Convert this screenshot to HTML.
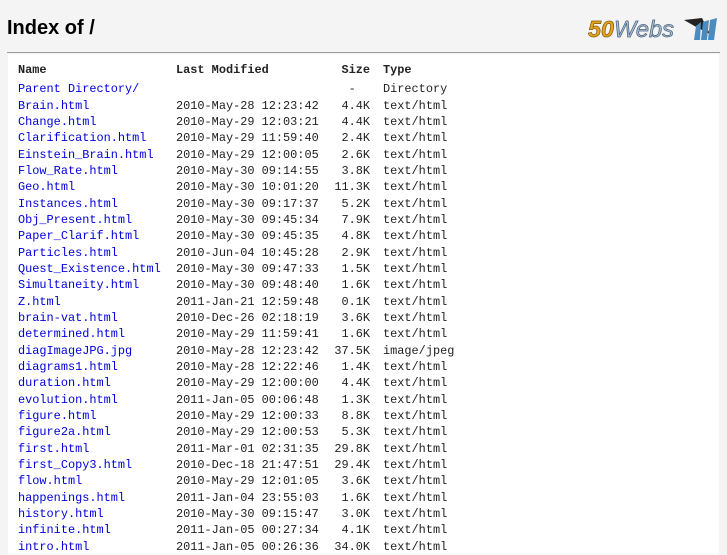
<!DOCTYPE html>
<html><head><meta charset="utf-8"><style>
html,body{margin:0;padding:0;background:#f4f4f4;width:727px;height:545px;overflow:hidden}
h1{position:absolute;left:7px;top:17px;margin:0;font:bold 20px "Liberation Sans",sans-serif;color:#000}
.logo{position:absolute;left:588px;top:14px}
.hr{position:absolute;left:7px;top:52px;width:713px;height:1px;background:#999}
.box{position:absolute;left:8px;top:54px;width:711px;height:500px;background:#fff}
table{position:absolute;left:18px;top:62px;border-collapse:collapse;font:11.9px "Liberation Mono","DejaVu Sans Mono",monospace;color:#222}
td,th{padding:0;height:16.33px;line-height:16.33px;white-space:pre;text-align:left;vertical-align:middle}
th{font-weight:bold;height:16px;padding-bottom:3px}
td.n{width:158px}td.d{width:147px}td.s{width:47px;text-align:right}td.t{padding-left:13px}
th.s{text-align:right}th.t{padding-left:13px}
a{color:#0000dd;text-decoration:none}
</style></head><body>
<h1>Index of /</h1>
<svg class="logo" width="132" height="30" viewBox="0 0 132 30">
<text x="0" y="23" font-family="Liberation Sans,sans-serif" font-weight="bold" font-style="italic" font-size="23" fill="#e8a21c" stroke="#7a5a10" stroke-width=".7" textLength="26" lengthAdjust="spacingAndGlyphs">50</text>
<text x="26" y="23" font-family="Liberation Sans,sans-serif" font-style="italic" font-size="23" fill="#a8c0d8" stroke="#4a6078" stroke-width=".7" textLength="60" lengthAdjust="spacingAndGlyphs">Webs</text>
<path d="M96 6 L114 4 L122 20 L110 14 Z" fill="#222"/>
<path d="M108 12 L113 8 L112 26 L106 26 Z M115 8 L121 6 L119 26 L113 26 Z M122 6 L129 4 L126 26 L120 26 Z" fill="#4a8cc0"/>
</svg>
<div class="hr"></div>
<div class="box"></div>
<table>
<tr><th>Name</th><th>Last Modified</th><th class="s">Size</th><th class="t">Type</th></tr>
<tr><td class="n"><a>Parent Directory/</a></td><td class="d"></td><td class="s">-  </td><td class="t">Directory</td></tr>
<tr><td class="n"><a>Brain.html</a></td><td class="d">2010-May-28 12:23:42</td><td class="s">4.4K</td><td class="t">text/html</td></tr>
<tr><td class="n"><a>Change.html</a></td><td class="d">2010-May-29 12:03:21</td><td class="s">4.4K</td><td class="t">text/html</td></tr>
<tr><td class="n"><a>Clarification.html</a></td><td class="d">2010-May-29 11:59:40</td><td class="s">2.4K</td><td class="t">text/html</td></tr>
<tr><td class="n"><a>Einstein_Brain.html</a></td><td class="d">2010-May-29 12:00:05</td><td class="s">2.6K</td><td class="t">text/html</td></tr>
<tr><td class="n"><a>Flow_Rate.html</a></td><td class="d">2010-May-30 09:14:55</td><td class="s">3.8K</td><td class="t">text/html</td></tr>
<tr><td class="n"><a>Geo.html</a></td><td class="d">2010-May-30 10:01:20</td><td class="s">11.3K</td><td class="t">text/html</td></tr>
<tr><td class="n"><a>Instances.html</a></td><td class="d">2010-May-30 09:17:37</td><td class="s">5.2K</td><td class="t">text/html</td></tr>
<tr><td class="n"><a>Obj_Present.html</a></td><td class="d">2010-May-30 09:45:34</td><td class="s">7.9K</td><td class="t">text/html</td></tr>
<tr><td class="n"><a>Paper_Clarif.html</a></td><td class="d">2010-May-30 09:45:35</td><td class="s">4.8K</td><td class="t">text/html</td></tr>
<tr><td class="n"><a>Particles.html</a></td><td class="d">2010-Jun-04 10:45:28</td><td class="s">2.9K</td><td class="t">text/html</td></tr>
<tr><td class="n"><a>Quest_Existence.html</a></td><td class="d">2010-May-30 09:47:33</td><td class="s">1.5K</td><td class="t">text/html</td></tr>
<tr><td class="n"><a>Simultaneity.html</a></td><td class="d">2010-May-30 09:48:40</td><td class="s">1.6K</td><td class="t">text/html</td></tr>
<tr><td class="n"><a>Z.html</a></td><td class="d">2011-Jan-21 12:59:48</td><td class="s">0.1K</td><td class="t">text/html</td></tr>
<tr><td class="n"><a>brain-vat.html</a></td><td class="d">2010-Dec-26 02:18:19</td><td class="s">3.6K</td><td class="t">text/html</td></tr>
<tr><td class="n"><a>determined.html</a></td><td class="d">2010-May-29 11:59:41</td><td class="s">1.6K</td><td class="t">text/html</td></tr>
<tr><td class="n"><a>diagImageJPG.jpg</a></td><td class="d">2010-May-28 12:23:42</td><td class="s">37.5K</td><td class="t">image/jpeg</td></tr>
<tr><td class="n"><a>diagrams1.html</a></td><td class="d">2010-May-28 12:22:46</td><td class="s">1.4K</td><td class="t">text/html</td></tr>
<tr><td class="n"><a>duration.html</a></td><td class="d">2010-May-29 12:00:00</td><td class="s">4.4K</td><td class="t">text/html</td></tr>
<tr><td class="n"><a>evolution.html</a></td><td class="d">2011-Jan-05 00:06:48</td><td class="s">1.3K</td><td class="t">text/html</td></tr>
<tr><td class="n"><a>figure.html</a></td><td class="d">2010-May-29 12:00:33</td><td class="s">8.8K</td><td class="t">text/html</td></tr>
<tr><td class="n"><a>figure2a.html</a></td><td class="d">2010-May-29 12:00:53</td><td class="s">5.3K</td><td class="t">text/html</td></tr>
<tr><td class="n"><a>first.html</a></td><td class="d">2011-Mar-01 02:31:35</td><td class="s">29.8K</td><td class="t">text/html</td></tr>
<tr><td class="n"><a>first_Copy3.html</a></td><td class="d">2010-Dec-18 21:47:51</td><td class="s">29.4K</td><td class="t">text/html</td></tr>
<tr><td class="n"><a>flow.html</a></td><td class="d">2010-May-29 12:01:05</td><td class="s">3.6K</td><td class="t">text/html</td></tr>
<tr><td class="n"><a>happenings.html</a></td><td class="d">2011-Jan-04 23:55:03</td><td class="s">1.6K</td><td class="t">text/html</td></tr>
<tr><td class="n"><a>history.html</a></td><td class="d">2010-May-30 09:15:47</td><td class="s">3.0K</td><td class="t">text/html</td></tr>
<tr><td class="n"><a>infinite.html</a></td><td class="d">2011-Jan-05 00:27:34</td><td class="s">4.1K</td><td class="t">text/html</td></tr>
<tr><td class="n"><a>intro.html</a></td><td class="d">2011-Jan-05 00:26:36</td><td class="s">34.0K</td><td class="t">text/html</td></tr>
</table>
</body></html>
